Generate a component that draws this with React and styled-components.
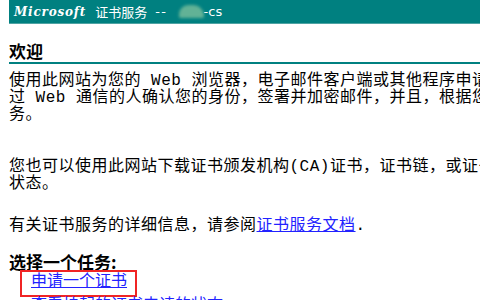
import React from 'react';
import styled, { createGlobalStyle, css } from 'styled-components';

const GlobalStyle = createGlobalStyle`
  html, body {
    margin: 0;
    padding: 0;
    background: #fff;
    overflow: hidden;
  }
  body {
    font-family: "Liberation Mono", "Noto Sans CJK SC", monospace;
  }
`;

const CertPage = () => {
  return (
    <>
      <GlobalStyle />
      <Page>
        <Banner>
          <Brand>Microsoft</Brand>
          <span>证书服务</span>
          <Dashes>--</Dashes>
          <Redacted />
          <span>-cs</span>
        </Banner>

        <Heading>欢迎</Heading>

        <Para $top={9}>
          使用此网站为您的 Web 浏览器，电子邮件客户端或其他程序申请证书。通过使用证书，您可以向通
          <br />
          过 Web 通信的人确认您的身份，签署并加密邮件，并且，根据您申请的证书的类型，执行其他安全任
          <br />
          务。
        </Para>

        <Para $top={35}>
          您也可以使用此网站下载证书颁发机构(CA)证书，证书链，或证书吊销列表(CRL)，或查看挂起的申请的
          <br />
          状态。
        </Para>

        <Para $top={25}>
          有关证书服务的详细信息，请参阅<Link href="#">证书服务文档</Link>.
        </Para>

        <TaskTitle>选择一个任务:</TaskTitle>
        <TaskList>
          <TaskItem $marked>
            <Link href="#">申请一个证书</Link>
          </TaskItem>
          <TaskItem>
            <Link href="#">查看挂起的证书申请的状态</Link>
          </TaskItem>
          <TaskItem>
            <Link href="#">下载一个 CA 证书，证书链或 CRL</Link>
          </TaskItem>
        </TaskList>
      </Page>
    </>
  );
};

const Page = styled.div`
  width: 760px;
  padding-left: 9px;
  color: #000;
  font-size: 16px;
`;

const Banner = styled.div`
  display: flex;
  align-items: center;
  height: 23px;
  padding-left: 5px;
  background: #008080;
  border-bottom: 1px solid #4fa3a3;
  color: #fff;
  font-family: "DejaVu Sans", "Noto Sans CJK SC", sans-serif;
  font-size: 13px;
  white-space: nowrap;
`;

const Brand = styled.span`
  font-family: "DejaVu Serif", serif;
  font-weight: bold;
  font-style: italic;
  font-size: 12px;
  letter-spacing: 0.8px;
  margin-right: 9px;
`;

const Dashes = styled.span`
  margin-left: 8px;
  letter-spacing: 1.5px;
`;

const Redacted = styled.span`
  display: inline-block;
  width: 25px;
  height: 13px;
  margin-left: 11px;
  background: #62b296;
  border-radius: 10px 12px 2px 2px;
  filter: blur(1.4px);
`;

const Heading = styled.h2`
  margin: 18px 0 0;
  padding-bottom: 3px;
  border-bottom: 2px solid #008080;
  font-family: "Noto Sans CJK SC", sans-serif;
  font-size: 17px;
  line-height: 17px;
  font-weight: bold;
`;

const Para = styled.p`
  margin: ${p => p.$top}px 0 0;
  line-height: 17px;
  letter-spacing: 0.5px;
  white-space: nowrap;
`;

const Link = styled.a`
  color: #2222ff;
  text-decoration: underline;
`;

const TaskTitle = styled.div`
  margin-top: 17px;
  font-family: "Noto Sans CJK SC", sans-serif;
  font-size: 17px;
  line-height: 20px;
  font-weight: bold;
`;

const TaskList = styled.ul`
  list-style: none;
  margin: 0;
  padding-left: 22px;
  line-height: 20px;
`;

const TaskItem = styled.li`
  position: relative;
  width: max-content;

  & + & {
    margin-top: 4px;
  }

  ${p => p.$marked && css`
    &::after {
      content: '';
      position: absolute;
      left: -11px;
      right: -10px;
      top: -2px;
      bottom: -5px;
      border: 2px solid #f02424;
      pointer-events: none;
    }
  `}
`;

export default CertPage;
